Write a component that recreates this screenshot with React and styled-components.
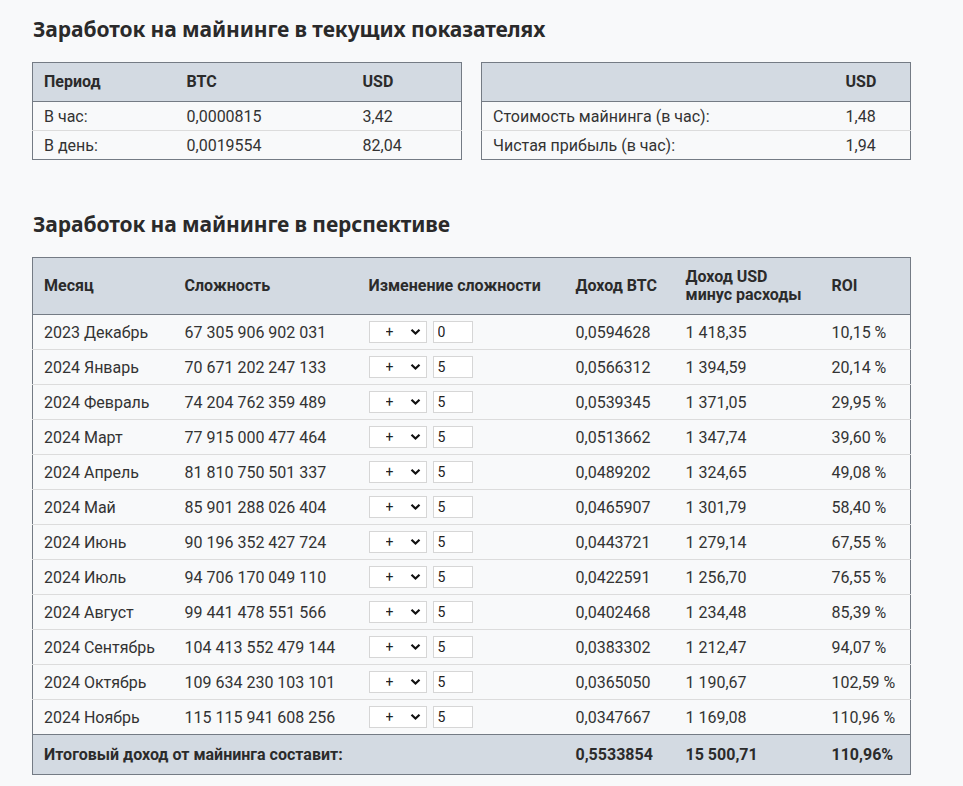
import React from "react";
import styled, { createGlobalStyle } from "styled-components";

const GlobalStyle = createGlobalStyle`
  html, body {
    margin: 0;
    padding: 0;
    background: #f8f9fa;
  }
  body {
    font-family: Roboto, "Liberation Sans", sans-serif;
    color: #2b2b2b;
  }
`;

const currentRows = [
  ["В час:", "0,0000815", "3,42"],
  ["В день:", "0,0019554", "82,04"],
];

const costRows = [
  ["Стоимость майнинга (в час):", "1,48"],
  ["Чистая прибыль (в час):", "1,94"],
];

const months = [
  ["2023 Декабрь", "67 305 906 902 031", "0", "0,0594628", "1 418,35", "10,15 %"],
  ["2024 Январь", "70 671 202 247 133", "5", "0,0566312", "1 394,59", "20,14 %"],
  ["2024 Февраль", "74 204 762 359 489", "5", "0,0539345", "1 371,05", "29,95 %"],
  ["2024 Март", "77 915 000 477 464", "5", "0,0513662", "1 347,74", "39,60 %"],
  ["2024 Апрель", "81 810 750 501 337", "5", "0,0489202", "1 324,65", "49,08 %"],
  ["2024 Май", "85 901 288 026 404", "5", "0,0465907", "1 301,79", "58,40 %"],
  ["2024 Июнь", "90 196 352 427 724", "5", "0,0443721", "1 279,14", "67,55 %"],
  ["2024 Июль", "94 706 170 049 110", "5", "0,0422591", "1 256,70", "76,55 %"],
  ["2024 Август", "99 441 478 551 566", "5", "0,0402468", "1 234,48", "85,39 %"],
  ["2024 Сентябрь", "104 413 552 479 144", "5", "0,0383302", "1 212,47", "94,07 %"],
  ["2024 Октябрь", "109 634 230 103 101", "5", "0,0365050", "1 190,67", "102,59 %"],
  ["2024 Ноябрь", "115 115 941 608 256", "5", "0,0347667", "1 169,08", "110,96 %"],
];

const Page = styled.div`
  width: 879px;
  padding: 16px 0 12px 32px;
`;

const Heading = styled.h2`
  margin: 0 0 19px 1px;
  font-family: "Noto Sans", "Open Sans", sans-serif;
  font-size: 21px;
  font-weight: 700;
  line-height: 27px;
  color: #2a2a2a;
  letter-spacing: -0.1px;
`;

const TopRow = styled.div`
  display: flex;
  gap: 19px;
  margin-bottom: 51px;
`;

const Table = styled.table`
  width: ${(p) => p.$width}px;
  border-collapse: collapse;
  border: 1px solid #747b84;
  table-layout: fixed;
  font-size: 16px;
`;

const HeadCell = styled.th`
  background: #d3dae2;
  height: ${(p) => p.$h || 38}px;
  padding: 0 11px;
  text-align: left;
  font-weight: 700;
  font-size: 16px;
  line-height: 18px;
  color: #2b2b2b;
  border-bottom: 1px solid #747b84;
  white-space: nowrap;
`;

const Cell = styled.td`
  height: ${(p) => p.$h || 28}px;
  padding: 0 11px;
  color: #333;
  border-top: 1px solid #dcdcdc;
  white-space: nowrap;
`;

const FootCell = styled.td`
  background: #d3dae2;
  height: 39px;
  padding: 0 11px;
  font-weight: 700;
  color: #2b2b2b;
  border-top: 1px solid #747b84;
  white-space: nowrap;
`;

const Change = styled.div`
  display: flex;
  align-items: center;
  gap: 6px;
`;

const SelectWrap = styled.div`
  position: relative;
  width: 58px;
  height: 22px;
`;

const Select = styled.select`
  appearance: none;
  width: 100%;
  height: 100%;
  border: 1px solid #d6d6d6;
  background: #fff;
  padding: 0 0 0 16px;
  font-family: Roboto, "Liberation Sans", sans-serif;
  font-size: 14px;
  color: #222;
  outline: none;
`;

const Chevron = styled.svg`
  position: absolute;
  right: 6px;
  top: 7px;
  pointer-events: none;
`;

const NumInput = styled.input`
  box-sizing: border-box;
  width: 40px;
  height: 22px;
  border: 1px solid #d6d6d6;
  background: #fff;
  padding: 0 4px;
  font-family: Roboto, "Liberation Sans", sans-serif;
  font-size: 14px;
  color: #222;
  outline: none;
`;

function ChangeControl({ value }) {
  return (
    <Change>
      <SelectWrap>
        <Select defaultValue="+">
          <option value="+">+</option>
          <option value="-">-</option>
        </Select>
        <Chevron width="11" height="8" viewBox="0 0 11 8">
          <path d="M1.5 1.8 L5.5 5.6 L9.5 1.8" fill="none" stroke="#111" strokeWidth="2.2" />
        </Chevron>
      </SelectWrap>
      <NumInput defaultValue={value} />
    </Change>
  );
}

export default function App() {
  return (
    <>
      <GlobalStyle />
      <Page>
        <Heading>Заработок на майнинге в текущих показателях</Heading>
        <TopRow>
          <Table $width={430}>
            <colgroup>
              <col style={{ width: 143 }} />
              <col style={{ width: 176 }} />
              <col />
            </colgroup>
            <thead>
              <tr>
                <HeadCell>Период</HeadCell>
                <HeadCell>BTC</HeadCell>
                <HeadCell>USD</HeadCell>
              </tr>
            </thead>
            <tbody>
              {currentRows.map((r) => (
                <tr key={r[0]}>
                  {r.map((c, i) => (
                    <Cell key={i}>{c}</Cell>
                  ))}
                </tr>
              ))}
            </tbody>
          </Table>
          <Table $width={430}>
            <colgroup>
              <col style={{ width: 353 }} />
              <col />
            </colgroup>
            <thead>
              <tr>
                <HeadCell></HeadCell>
                <HeadCell>USD</HeadCell>
              </tr>
            </thead>
            <tbody>
              {costRows.map((r) => (
                <tr key={r[0]}>
                  <Cell>{r[0]}</Cell>
                  <Cell>{r[1]}</Cell>
                </tr>
              ))}
            </tbody>
          </Table>
        </TopRow>

        <Heading>Заработок на майнинге в перспективе</Heading>
        <Table $width={879}>
          <colgroup>
            <col style={{ width: 141 }} />
            <col style={{ width: 184 }} />
            <col style={{ width: 207 }} />
            <col style={{ width: 110 }} />
            <col style={{ width: 146 }} />
            <col />
          </colgroup>
          <thead>
            <tr>
              <HeadCell $h={56}>Месяц</HeadCell>
              <HeadCell $h={56}>Сложность</HeadCell>
              <HeadCell $h={56}>Изменение сложности</HeadCell>
              <HeadCell $h={56}>Доход BTC</HeadCell>
              <HeadCell $h={56}>
                Доход USD
                <br />
                минус расходы
              </HeadCell>
              <HeadCell $h={56}>ROI</HeadCell>
            </tr>
          </thead>
          <tbody>
            {months.map((m) => (
              <tr key={m[0]}>
                <Cell $h={34}>{m[0]}</Cell>
                <Cell $h={34}>{m[1]}</Cell>
                <Cell $h={34}>
                  <ChangeControl value={m[2]} />
                </Cell>
                <Cell $h={34}>{m[3]}</Cell>
                <Cell $h={34}>{m[4]}</Cell>
                <Cell $h={34}>{m[5]}</Cell>
              </tr>
            ))}
          </tbody>
          <tfoot>
            <tr>
              <FootCell colSpan={3}>Итоговый доход от майнинга составит:</FootCell>
              <FootCell>0,5533854</FootCell>
              <FootCell>15 500,71</FootCell>
              <FootCell>110,96%</FootCell>
            </tr>
          </tfoot>
        </Table>
      </Page>
    </>
  );
}
